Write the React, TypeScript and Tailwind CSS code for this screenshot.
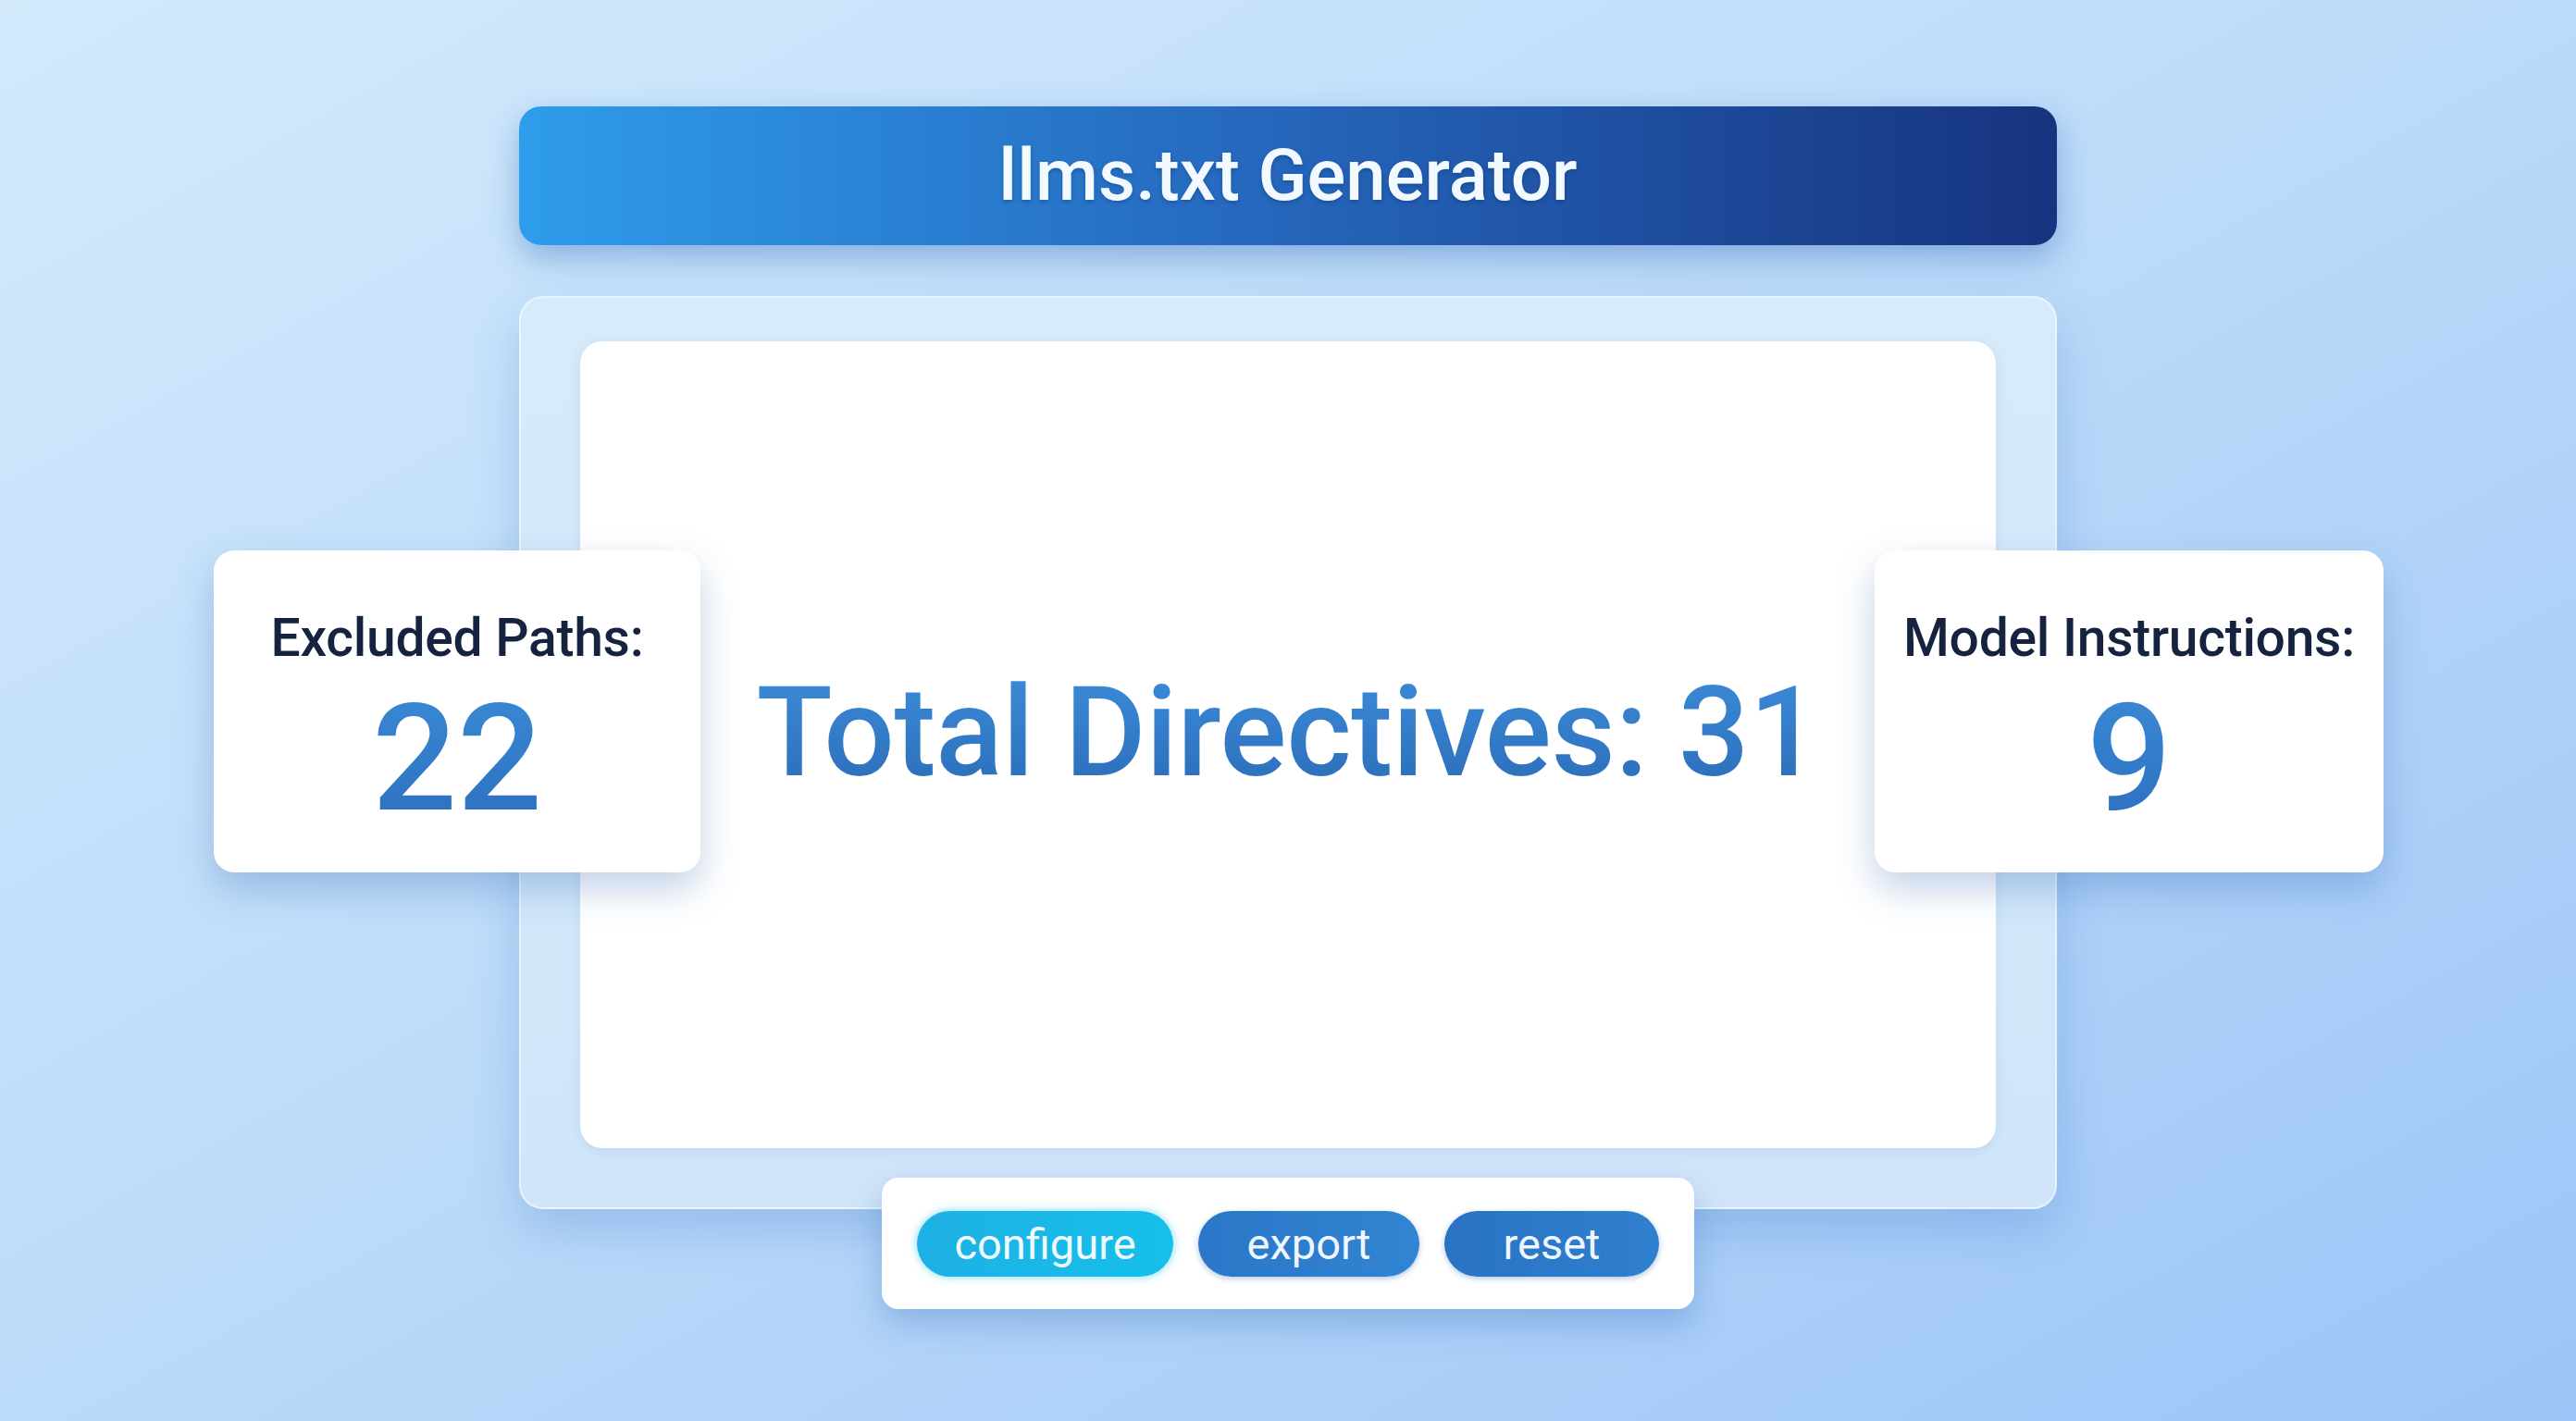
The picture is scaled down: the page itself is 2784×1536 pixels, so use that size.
import React from "react";

function StatCard({ label, value, className }: { label: string; value: string; className: string }) {
  return (
    <div
      className={`flex h-[348px] flex-col items-center rounded-[22px] bg-white pt-[66px] shadow-[0_18px_40px_rgba(40,95,170,0.28)] ${className}`}
    >
      <div className="text-[57px] font-medium leading-none tracking-[-0.005em] text-[#15233f]">{label}</div>
      <div className="mt-[21px] bg-gradient-to-b from-[#3a8ad6] to-[#2c6fbd] bg-clip-text text-[162px] font-medium leading-none text-transparent">
        {value}
      </div>
    </div>
  );
}

export default function App() {
  return (
    <div
      className="relative flex min-h-[1536px] w-full flex-col items-center overflow-hidden bg-gradient-to-br from-[#d2eafc] via-[#bcdaf9] to-[#9cc5f7]"
      style={{ fontFamily: "Roboto, 'Noto Sans', sans-serif" }}
    >
      {/* header */}
      <div className="mt-[115px] flex h-[150px] w-[1662px] items-center justify-center rounded-[24px] bg-gradient-to-r from-[#2f9cec] via-[#2566bb] to-[#17337f] shadow-[0_14px_34px_rgba(35,95,180,0.38)]">
        <span className="text-[78px] font-medium leading-none text-[#f2f9ff] [text-shadow:0_2px_4px_rgba(10,40,100,0.35)]">
          llms.txt Generator
        </span>
      </div>

      {/* main area */}
      <div className="relative mt-[55px] flex w-full flex-col items-center">
        <div className="flex h-[987px] w-[1662px] flex-col rounded-[26px] border-2 border-white/50 bg-gradient-to-b from-[#d6ebfb] to-[#d0e5f9] px-[64px] pb-[64px] pt-[47px] shadow-[0_22px_50px_rgba(60,120,200,0.28)]">
          <div className="flex flex-1 items-center justify-center rounded-[24px] bg-white pb-[26px] shadow-[0_4px_14px_rgba(70,130,200,0.12)]">
            <span className="bg-gradient-to-b from-[#3b8bd8] to-[#2c6db9] bg-clip-text text-[135px] font-medium leading-none tracking-[-0.003em] text-transparent">
              Total Directives: 31
            </span>
          </div>
        </div>

        {/* button bar */}
        <div className="relative -mt-[34px] flex h-[142px] w-[878px] items-center gap-[27px] rounded-[18px] bg-white pl-[38px] shadow-[0_16px_36px_rgba(40,100,180,0.3)]">
          <button className="flex h-[71px] w-[277px] items-center justify-center rounded-full bg-gradient-to-r from-[#1eb0e4] to-[#14c0ea] text-[47px] leading-none text-[#eefaff] shadow-[0_0_10px_rgba(30,190,235,0.6)]">
            configure
          </button>
          <button className="flex h-[71px] w-[239px] items-center justify-center rounded-full bg-gradient-to-r from-[#2b76c8] to-[#3185d3] text-[47px] leading-none text-[#eef6ff] shadow-[0_2px_6px_rgba(30,90,170,0.35)]">
            export
          </button>
          <button className="flex h-[71px] w-[232px] items-center justify-center rounded-full bg-gradient-to-r from-[#2a72c4] to-[#2f80cf] text-[47px] leading-none text-[#eef6ff] shadow-[0_2px_6px_rgba(30,90,170,0.35)]">
            reset
          </button>
        </div>

        {/* side stat cards overlaying the panel */}
        <div className="absolute inset-x-0 top-[275px] flex justify-between pl-[231px] pr-[208px]">
          <StatCard label="Excluded Paths:" value="22" className="w-[526px]" />
          <StatCard label="Model Instructions:" value="9" className="w-[550px]" />
        </div>
      </div>
    </div>
  );
}
